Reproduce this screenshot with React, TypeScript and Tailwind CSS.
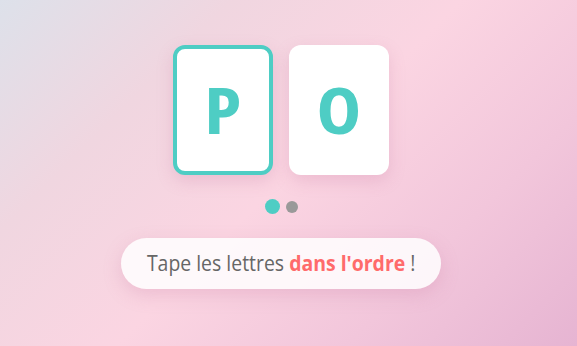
export default function App() {
  const letters = [
    { ch: 'P', active: true },
    { ch: 'O', active: false },
  ]
  return (
    <div
      className="min-h-screen w-full pr-[15px] pt-[45px] flex flex-col items-center bg-[linear-gradient(135deg,#dde1ea_0%,#f0d6e0_25%,#fbd5e2_50%,#f2c6db_75%,#e6b4d2_100%)]"
      style={{ fontFamily: "'Open Sans', 'Noto Sans', sans-serif" }}
    >
      <div className="flex gap-4">
        {letters.map(l => (
          <div
            key={l.ch}
            className={`w-[100px] h-[130px] rounded-xl bg-white flex items-center justify-center shadow-[0_6px_16px_rgba(200,120,160,0.25)] ${l.active ? 'border-4 border-[#4ecdc4]' : ''}`}
          >
            <span className="inline-block text-[64px] leading-none font-bold text-[#4ecdc4] [font-stretch:75%] scale-x-[1.18]">{l.ch}</span>
          </div>
        ))}
      </div>

      <div className="flex items-center gap-[6px] mt-[24px]">
        <span className="w-[15px] h-[15px] rounded-full bg-[#4ecdc4]" />
        <span className="w-[12px] h-[12px] rounded-full bg-[#999]" />
      </div>

      <div className="mt-[24px] h-[51px] w-[320px] rounded-full bg-white/85 shadow-[0_6px_18px_rgba(200,120,160,0.25)] flex items-center justify-center">
        <p className="shrink-0 whitespace-nowrap text-[21px] text-[#666] scale-x-[0.925]">
          Tape les lettres <span className="font-bold text-[#ff6b6b]">dans l'ordre</span> !
        </p>
      </div>
    </div>
  )
}
